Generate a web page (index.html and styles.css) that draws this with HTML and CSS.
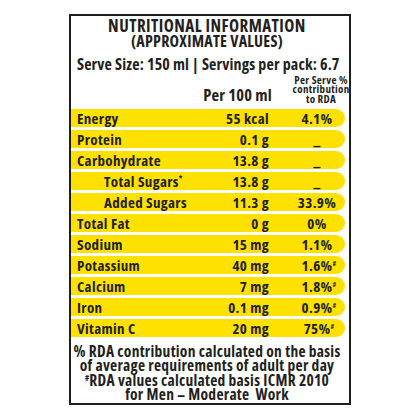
FILE: index.html
```html
<!DOCTYPE html>
<html lang="en">
	<head>
		<meta charset="UTF-8" />
		<meta name="viewport" content="width=device-width, initial-scale=1.0" />
		<title>Nutritional Information</title>
		<link rel="stylesheet" href="styles.css">
	</head>
	<body>
		<div class="label-panel">
			<div class="title">
				<div class="title-main">NUTRITIONAL INFORMATION</div>
				<div class="title-sub">(APPROXIMATE VALUES)</div>
			</div>
			<div class="serve">Serve Size: 150 ml | Servings per pack: 6.7</div>
			<div class="table-head">
				<span></span>
				<span class="head-value">Per 100 ml</span>
				<span class="head-rda">Per Serve %<br>contribution<br>to RDA</span>
			</div>
			<div class="rows">
				<div class="row"><span>Energy</span><span class="val">55 kcal</span><span class="pct">4.1%</span></div>
				<div class="row"><span>Protein</span><span class="val">0.1 g</span><span class="pct">_</span></div>
				<div class="row"><span>Carbohydrate</span><span class="val">13.8 g</span><span class="pct">_</span></div>
				<div class="row"><span class="sub">Total Sugars<sup class="mark">*</sup></span><span class="val">13.8 g</span><span class="pct">_</span></div>
				<div class="row"><span class="sub">Added Sugars</span><span class="val">11.3 g</span><span class="pct">33.9%</span></div>
				<div class="row"><span>Total Fat</span><span class="val">0 g</span><span class="pct">0%</span></div>
				<div class="row"><span>Sodium</span><span class="val">15 mg</span><span class="pct">1.1%</span></div>
				<div class="row"><span>Potassium</span><span class="val">40 mg</span><span class="pct">1.6%<sup class="hash">#</sup></span></div>
				<div class="row"><span>Calcium</span><span class="val">7 mg</span><span class="pct">1.8%<sup class="hash">#</sup></span></div>
				<div class="row"><span>Iron</span><span class="val">0.1 mg</span><span class="pct">0.9%<sup class="hash">#</sup></span></div>
				<div class="row"><span>Vitamin C</span><span class="val">20 mg</span><span class="pct">75%<sup class="hash">#</sup></span></div>
			</div>
			<div class="notes">
				% RDA contribution calculated on the basis<br>
				of average requirements of adult per day<br>
				<sup class="note-hash">#</sup>RDA values calculated basis ICMR 2010<br>
				for Men – Moderate&nbsp; Work
			</div>
		</div>
	</body>
</html>
```
FILE: styles.css
```css
body {
	margin: 0;
	background-color: #fff;
	font-family: "Open Sans", sans-serif;
	font-weight: 700;
	font-stretch: 75%;
	color: #231f20;
}
.label-panel {
	width: 282px;
	height: 391px;
	margin: 14px 0 0 69px;
	border: 2px solid #1e1e1e;
	box-sizing: border-box;
	padding-top: 2px;
}
.title {
	text-align: center;
	padding-right: 6px;
	white-space: nowrap;
}
.title-main {
	font-size: 17px;
	line-height: 16px;
	letter-spacing: 0.45px;
}
.title-sub {
	font-size: 16px;
	line-height: 15px;
	letter-spacing: 0.25px;
}
.serve {
	font-size: 16px;
	line-height: 16px;
	letter-spacing: 0.15px;
	margin-top: 7px;
	padding-left: 6px;
	white-space: nowrap;
}
.table-head,
.row {
	display: grid;
	grid-template-columns: minmax(0, 1fr) 70px 48px;
	column-gap: 25px;
	padding: 0 4px 0 6px;
}
.table-head {
	height: 37px;
	align-items: end;
}
.head-value {
	text-align: right;
	font-size: 16.5px;
	line-height: 16px;
	letter-spacing: 0.2px;
	padding-bottom: 6px;
	white-space: nowrap;
}
.head-rda {
	text-align: center;
	font-size: 11px;
	line-height: 9.5px;
	letter-spacing: 0.3px;
	padding-bottom: 6px;
	white-space: nowrap;
	margin: 0 -8px;
}
.rows {
	display: flex;
	flex-direction: column;
	gap: 3px;
}
.row {
	height: 18px;
	background-color: #ffe100;
	border-radius: 0 9px 9px 0;
	font-size: 15px;
	line-height: 18px;
	letter-spacing: 0.35px;
	margin-right: 4px;
	white-space: nowrap;
}
.sub {
	padding-left: 27px;
}
.val {
	text-align: right;
	margin-right: -1px;
}
.pct {
	text-align: center;
}
.mark {
	font-size: 8px;
	line-height: 0;
	vertical-align: 5px;
}
.hash {
	font-size: 7px;
	line-height: 0;
	vertical-align: 5px;
	margin-right: -4px;
}
.notes {
	margin-top: 7px;
	text-align: center;
	font-size: 15.5px;
	line-height: 14.3px;
	letter-spacing: 0.27px;
	padding-right: 6px;
	white-space: nowrap;
}
.note-hash {
	font-size: 8px;
	line-height: 0;
	vertical-align: 5px;
}
```
